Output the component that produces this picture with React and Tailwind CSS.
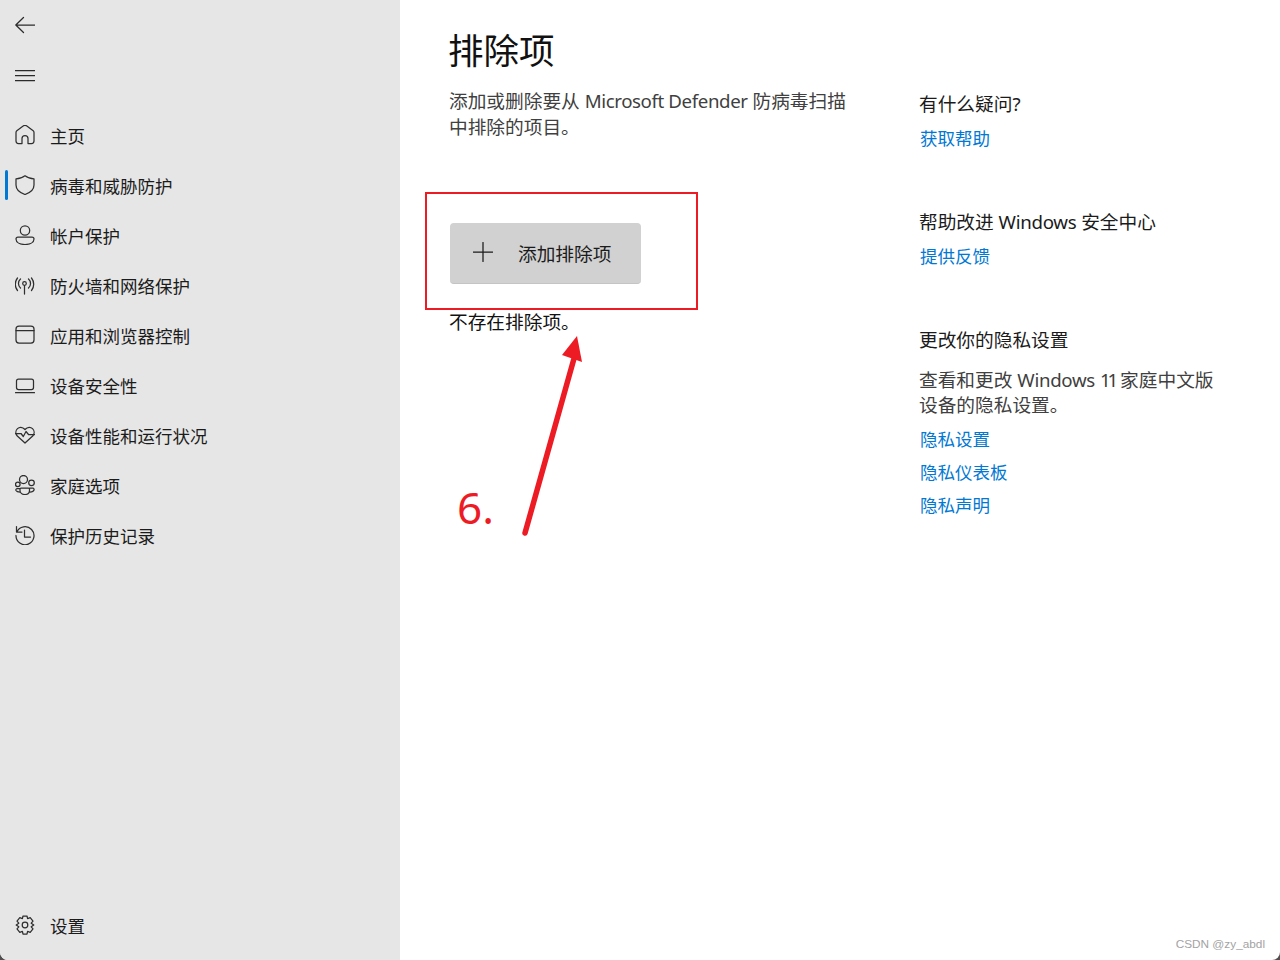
const FONT = "font-['Noto_Sans','Noto_Sans_CJK_SC',sans-serif]";

const stroke = { fill: "none", stroke: "currentColor", strokeWidth: 1.25, strokeLinecap: "round", strokeLinejoin: "round" };

const Icon = ({ children, size = 20 }) => (
  <svg width={size} height={size} viewBox="0 0 20 20" {...stroke}>{children}</svg>
);

const NAV = [
  { label: "主页", icon: <path d="M7 18.500H3.500A2.500 2.500 0 0 1 1 16V7.500C1 6.800 1.300 6.200 1.800 5.800L8.500 0.800C9.400 0.200 10.600 0.200 11.500 0.800L18.200 5.800C18.700 6.200 19 6.800 19 7.500V16A2.500 2.500 0 0 1 16.500 18.500H13V13.500A3 3 0 0 0 7 13.500Z" /> },
  { label: "病毒和威胁防护", active: true, icon: <path d="M10 0.800C12.500 2.800 15.500 3.800 19 3.800V10C19 14.500 15 17.800 10 19.500C5 17.800 1 14.500 1 10V3.800C4.500 3.800 7.500 2.800 10 0.800Z" /> },
  { label: "帐户保护", icon: <><circle cx="10" cy="5.500" r="4.700" /><path d="M3 12H17A2 2 0 0 1 19 14C19 17.500 15 19.500 10 19.500C5 19.500 1 17.500 1 14A2 2 0 0 1 3 12Z" /></> },
  { label: "防火墙和网络保护", icon: <><circle cx="9.500" cy="8.500" r="1.800" /><path d="M9.500 10.500V19M5.500 13A6 6 0 0 1 5.500 4M13.500 4A6 6 0 0 1 13.500 13M2.500 15.500A10 10 0 0 1 2.500 3M16.500 3A10 10 0 0 1 16.500 15.500" /></> },
  { label: "应用和浏览器控制", icon: <><rect x="1" y="1" width="18" height="17" rx="3" /><path d="M1 5.500H19" /></> },
  { label: "设备安全性", icon: <><rect x="1.500" y="4" width="17" height="10.500" rx="2" /><path d="M0.500 17.700H19.500" /></> },
  { label: "设备性能和运行状况", icon: <path d="M2.300 11C-2 6 4.500 -1.500 10 4.500C15.500 -1.500 22 6 17.700 11L10 18L2.300 11ZM0.500 8.500H6L8.300 11.500L11 6.500L13.500 9.500H19.500" /> },
  { label: "家庭选项", icon: <><circle cx="8.500" cy="4.500" r="4" /><circle cx="16.500" cy="7.800" r="2.800" /><circle cx="2.800" cy="9.300" r="2.300" /><path d="M6 13H13.500A1 1 0 0 1 14.500 14V15.500C14.500 18 12.500 19.500 10 19.500C7.500 19.500 5 18 5 15.500V14A1 1 0 0 1 6 13ZM14.500 13H17.800A1.500 1.500 0 0 1 19 15C18.500 16.500 17 17 15 17M5 13.500H2A1.500 1.500 0 0 0 1 15.500C1.500 16.500 3 17 5 17" /></> },
  { label: "保护历史记录", icon: <><path d="M1.500 1.500V7H7M1.800 7A9 9 0 1 1 1 10.500" /><path d="M9.500 5V12H15.500" /></> },
];

const NavRow = ({ item }) => (
  <div className="relative flex h-[50px] items-center text-[#1b1b1b]">
    {item.active && <span className="absolute left-[5px] top-[9px] h-[30px] w-[3px] rounded-full bg-[#0078d4]" />}
    <span className="flex w-[50px] shrink-0 justify-center pb-[2px] text-[#2f2f2f]"><Icon>{item.icon}</Icon></span>
    <span className="text-[17.500px]">{item.label}</span>
  </div>
);

const HelpLink = ({ children }) => (
  <a className="block pl-[1px] text-[17.500px] leading-[33px] text-[#0078d4]">{children}</a>
);

export default function App() {
  return (
    <div className="h-[960px] w-[1280px] bg-[#4f4f4f]">
      <div className={`${FONT} relative flex h-[960px] w-[1280px] overflow-hidden rounded-b-[8px] bg-white`}>
        <aside className="flex w-[400px] shrink-0 flex-col bg-[#e6e6e6]">
          <div className="flex h-[50px] w-[50px] items-center justify-center text-[#2b2b2b]">
            <Icon size={20}><path d="M19.500 10H0.800M8.500 2.500L0.800 10L8.500 17.500" /></Icon>
          </div>
          <div className="flex h-[50px] w-[50px] items-center justify-center text-[#2b2b2b]">
            <Icon size={20}><path d="M0.500 5.500H19.500M0.500 10.500H19.500M0.500 15.500H19.500" /></Icon>
          </div>
          <nav className="mt-[11px] flex flex-col">
            {NAV.map((item) => <NavRow key={item.label} item={item} />)}
          </nav>
          <div className="mt-auto mb-[9px] flex h-[50px] items-center text-[#1b1b1b]">
            <span className="flex w-[50px] justify-center pb-[2px] text-[#2f2f2f]">
              <Icon><circle cx="10" cy="10" r="2.800" /><path d="M8 1H12L12.600 3.600L15.200 2.700L18 6.200L16.200 8.200L18.800 10L16.200 11.800L18 13.800L15.200 17.300L12.600 16.400L12 19H8L7.400 16.400L4.800 17.300L2 13.800L3.800 11.800L1.200 10L3.800 8.200L2 6.200L4.800 2.700L7.400 3.600Z" /></Icon>
            </span>
            <span className="text-[17.500px]">设置</span>
          </div>
        </aside>

        <main className="flex min-w-0 flex-1">
          <section className="w-[470px] shrink-0 pl-[49px]">
            <h1 className="mt-[24px] -ml-[1px] text-[35.500px] leading-[52px] font-normal text-[#111]">排除项</h1>
            <p className="mt-[12px] w-[400px] text-[18.700px] leading-[26px] text-[#404040]">添加或删除要从 <span className="tracking-[-0.4px]">Microsoft Defender</span> 防病毒扫描中排除的项目。</p>
            <button className="mt-[83px] ml-[1px] flex h-[61px] w-[191px] items-center rounded-[4px] border-b border-[#c4c4c4] bg-[#d1d1d1] pl-[23px] text-[#1b1b1b]">
              <span className="pb-[2px]"><Icon size={20}><path d="M10 0.500V19.500M0.500 10H19.500" /></Icon></span>
              <span className="ml-[25px] pt-[2px] text-[18.700px]">添加排除项</span>
            </button>
            <p className="mt-[25px] text-[18.700px] leading-[26px] text-[#111]">不存在排除项。</p>
          </section>

          <section className="pt-[91px] pl-[49px]">
            <h2 className="text-[18.700px] leading-[26px] font-normal text-[#1b1b1b]">有什么疑问?</h2>
            <div className="mt-[5px]"><HelpLink>获取帮助</HelpLink></div>
            <h2 className="mt-[54px] text-[18.700px] leading-[26px] font-normal text-[#1b1b1b]">帮助改进 <span className="tracking-[-0.3px]">Windows</span> 安全中心</h2>
            <div className="mt-[5px]"><HelpLink>提供反馈</HelpLink></div>
            <h2 className="mt-[54px] text-[18.700px] leading-[26px] font-normal text-[#1b1b1b]">更改你的隐私设置</h2>
            <p className="mt-[14px] w-[310px] text-[18.700px] leading-[25px] text-[#404040]">查看和更改 <span className="tracking-[-0.3px]">Windows</span> <span className="tracking-[-3px]">11</span> 家庭中文版设备的隐私设置。</p>
            <div className="mt-[6px]">
              <HelpLink>隐私设置</HelpLink>
              <HelpLink>隐私仪表板</HelpLink>
              <HelpLink>隐私声明</HelpLink>
            </div>
          </section>
        </main>

        {/* 截图上的标注 */}
        <div className="absolute left-[425px] top-[192px] h-[118px] w-[273px] border-2 border-[#ed1c24]" />
        <svg className="absolute left-[500px] top-[330px]" width="100" height="210" viewBox="0 0 100 210">
          <path d="M25 203L75 25" stroke="#ed1c24" strokeWidth="5.500" strokeLinecap="round" fill="none" />
          <path d="M77 6L82 32L62 25Z" fill="#ed1c24" />
        </svg>
        <span className="absolute left-[457px] top-[477px] text-[44px] leading-[60px] text-[#ed1c24]">6.</span>
        <span className="absolute right-[15px] bottom-[8px] font-['Liberation_Sans',sans-serif] text-[11.800px] leading-[16px] text-[#a3a3a3]">CSDN @zy_abdl</span>
      </div>
    </div>
  );
}
